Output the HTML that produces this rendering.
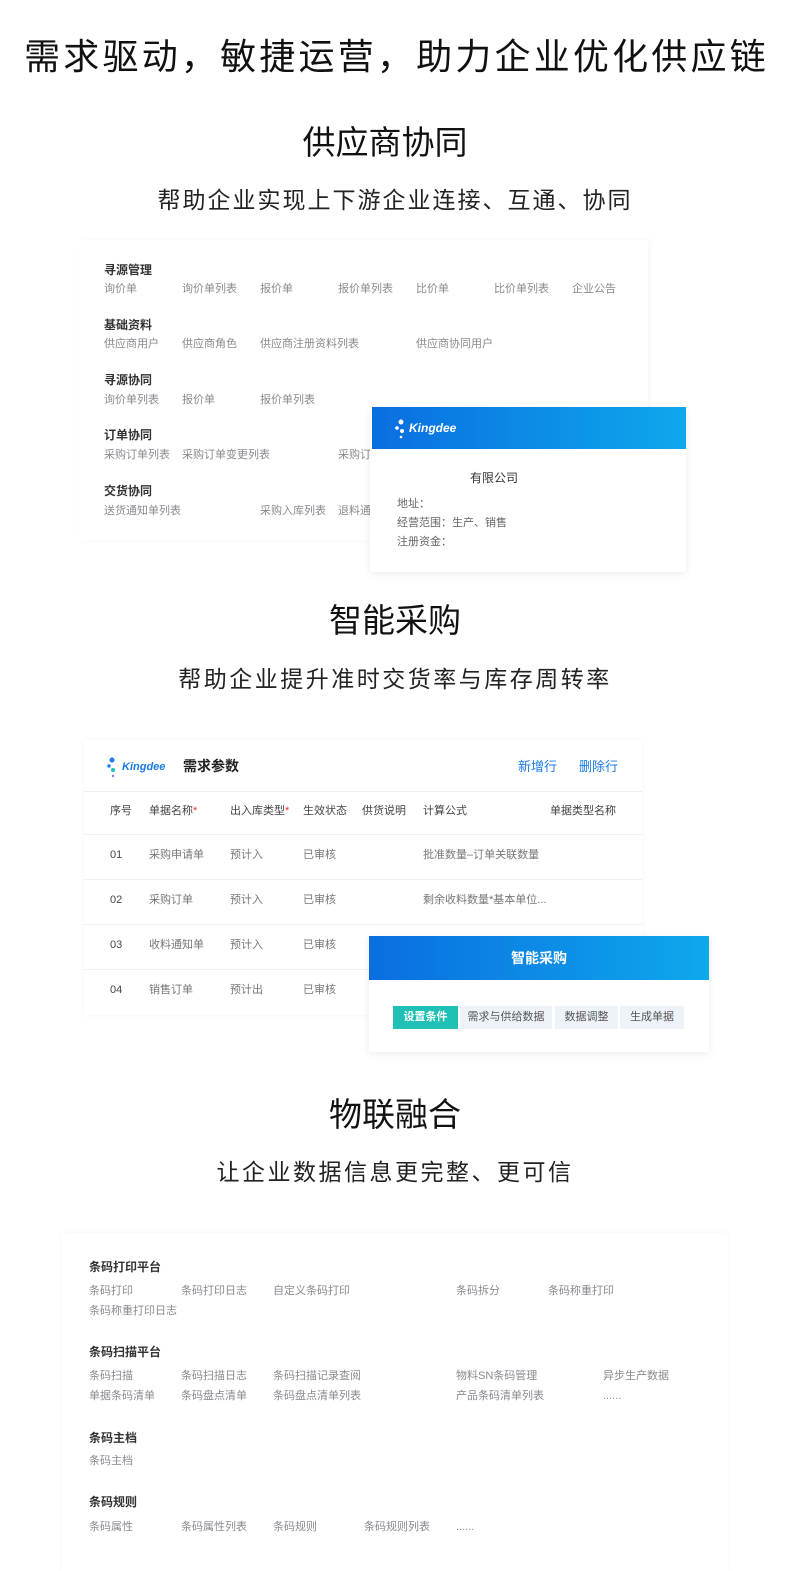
<!DOCTYPE html>
<html><head><meta charset="utf-8"><style>
*{margin:0;padding:0;box-sizing:border-box}
body{width:790px;height:1571px;background:#fff;position:relative;overflow:hidden;font-family:"Liberation Sans","Noto Sans CJK SC",sans-serif;}
.a{position:absolute;white-space:nowrap;line-height:1;}
.h1{font-size:36px;color:#111;left:0;width:790px;text-align:center;letter-spacing:3.2px;text-indent:3px}
.h2{font-size:33px;color:#111;left:0;width:790px;text-align:center}
.sub{font-size:23px;color:#222;left:0;width:790px;text-align:center;letter-spacing:2px}
.g{font-size:11px;color:#8a8a90}
.b{font-size:12px;color:#333;font-weight:bold}
.panel{position:absolute;background:#fff}
.blue{background:linear-gradient(90deg,#0a6ee0,#0ea8ec)}
.th{font-size:11px;color:#444}
.td{font-size:11px;color:#777}
.tab{position:absolute;top:1006px;height:23px;font-size:11px;color:#555;background:#eef2f9;text-align:center;line-height:23px}
</style></head><body>
<div class="a h1" style="top:39px">需求驱动，敏捷运营，助力企业优化供应链</div>

<div class="a h2" style="top:126px;left:-10px">供应商协同</div>
<div class="a sub" style="top:189px">帮助企业实现上下游企业连接、互通、协同</div>

<div class="panel" style="left:80px;top:240px;width:568px;height:300px;box-shadow:2px 0 6px rgba(0,0,0,0.04)"></div>
<div class="a b" style="left:104px;top:264px">寻源管理</div>
<div class="a g" style="left:104px;top:284px">询价单</div><div class="a g" style="left:182px;top:284px">询价单列表</div><div class="a g" style="left:260px;top:284px">报价单</div><div class="a g" style="left:338px;top:284px">报价单列表</div><div class="a g" style="left:416px;top:284px">比价单</div><div class="a g" style="left:494px;top:284px">比价单列表</div><div class="a g" style="left:572px;top:284px">企业公告</div>
<div class="a b" style="left:104px;top:319px">基础资料</div>
<div class="a g" style="left:104px;top:339px">供应商用户</div><div class="a g" style="left:182px;top:339px">供应商角色</div><div class="a g" style="left:260px;top:339px">供应商注册资料列表</div><div class="a g" style="left:416px;top:339px">供应商协同用户</div>
<div class="a b" style="left:104px;top:374px">寻源协同</div>
<div class="a g" style="left:104px;top:395px">询价单列表</div><div class="a g" style="left:182px;top:395px">报价单</div><div class="a g" style="left:260px;top:395px">报价单列表</div>
<div class="a b" style="left:104px;top:429px">订单协同</div>
<div class="a g" style="left:104px;top:450px">采购订单列表</div><div class="a g" style="left:182px;top:450px">采购订单变更列表</div><div class="a g" style="left:338px;top:450px">采购订</div>
<div class="a b" style="left:104px;top:485px">交货协同</div>
<div class="a g" style="left:104px;top:506px">送货通知单列表</div><div class="a g" style="left:260px;top:506px">采购入库列表</div><div class="a g" style="left:338px;top:506px">退料通</div>

<div class="panel" style="left:370px;top:407px;width:316px;height:165px;box-shadow:0 2px 8px rgba(0,0,0,0.08)"></div>
<div class="panel blue" style="left:372px;top:407px;width:314px;height:42px"></div>
<svg class="a" style="left:395px;top:419px" width="12" height="20"><circle cx="6" cy="3" r="2.5" fill="#fff"/><circle cx="2" cy="9" r="1.8" fill="#fff"/><circle cx="7" cy="12" r="2" fill="#fff"/><circle cx="6" cy="18" r="1.3" fill="#fff"/></svg>
<div class="a" style="left:409px;top:422px;font-size:12px;font-weight:bold;font-style:italic;color:#fff">Kingdee</div>
<div class="a" style="left:470px;top:472px;font-size:12px;color:#333">有限公司</div>
<div class="a g" style="left:397px;top:499px;color:#666">地址：</div>
<div class="a g" style="left:397px;top:518px;color:#666">经营范围：生产、销售</div>
<div class="a g" style="left:397px;top:537px;color:#666">注册资金：</div>

<div class="a h2" style="top:604px">智能采购</div>
<div class="a sub" style="top:668px;letter-spacing:2.5px">帮助企业提升准时交货率与库存周转率</div>

<div class="panel" style="left:84px;top:740px;width:558px;height:275px;box-shadow:0 0 6px rgba(0,0,0,0.04)"></div>
<svg class="a" style="left:107px;top:757px" width="14" height="22"><circle cx="5" cy="3" r="2.5" fill="#1a7be8"/><circle cx="2" cy="9" r="1.7" fill="#1a7be8"/><circle cx="6" cy="13" r="2" fill="#19c4b4"/><circle cx="6" cy="19" r="1.2" fill="#9b6de8"/></svg>
<div class="a" style="left:122px;top:762px;font-size:11px;font-weight:bold;font-style:italic;color:#1a7be8">Kingdee</div>
<div class="a" style="left:183px;top:759px;font-size:14px;font-weight:bold;color:#222">需求参数</div>
<div class="a" style="left:518px;top:760px;font-size:13px;color:#1a7be8">新增行</div>
<div class="a" style="left:579px;top:760px;font-size:13px;color:#1a7be8">删除行</div>
<div class="panel" style="left:84px;top:791px;width:558px;height:1px;background:#eee"></div>
<div class="a th" style="left:110px;top:806px">序号</div><div class="a th" style="left:149px;top:806px">单据名称<span style="color:#e33">*</span></div><div class="a th" style="left:230px;top:806px">出入库类型<span style="color:#e33">*</span></div><div class="a th" style="left:303px;top:806px">生效状态</div><div class="a th" style="left:362px;top:806px">供货说明</div><div class="a th" style="left:423px;top:806px">计算公式</div><div class="a th" style="left:550px;top:806px">单据类型名称</div>
<div class="panel" style="left:84px;top:834px;width:558px;height:1px;background:#f0f0f2"></div>
<div class="panel" style="left:84px;top:879px;width:558px;height:1px;background:#f0f0f2"></div>
<div class="panel" style="left:84px;top:924px;width:558px;height:1px;background:#f0f0f2"></div>
<div class="panel" style="left:84px;top:969px;width:558px;height:1px;background:#f0f0f2"></div>
<div class="a td" style="left:110px;top:850px;color:#444">01</div><div class="a td" style="left:149px;top:850px">采购申请单</div><div class="a td" style="left:230px;top:850px">预计入</div><div class="a td" style="left:303px;top:850px">已审核</div><div class="a td" style="left:423px;top:850px">批准数量–订单关联数量</div>
<div class="a td" style="left:110px;top:895px;color:#444">02</div><div class="a td" style="left:149px;top:895px">采购订单</div><div class="a td" style="left:230px;top:895px">预计入</div><div class="a td" style="left:303px;top:895px">已审核</div><div class="a td" style="left:423px;top:895px">剩余收料数量*基本单位...</div>
<div class="a td" style="left:110px;top:940px;color:#444">03</div><div class="a td" style="left:149px;top:940px">收料通知单</div><div class="a td" style="left:230px;top:940px">预计入</div><div class="a td" style="left:303px;top:940px">已审核</div>
<div class="a td" style="left:110px;top:985px;color:#444">04</div><div class="a td" style="left:149px;top:985px">销售订单</div><div class="a td" style="left:230px;top:985px">预计出</div><div class="a td" style="left:303px;top:985px">已审核</div>

<div class="panel" style="left:369px;top:936px;width:340px;height:116px;box-shadow:0 2px 8px rgba(0,0,0,0.08)"></div>
<div class="panel blue" style="left:369px;top:936px;width:340px;height:44px"></div>
<div class="a" style="left:369px;width:340px;text-align:center;top:951px;font-size:14px;font-weight:bold;color:#fff">智能采购</div>
<div class="tab" style="left:393px;width:65px;background:#1fc0b6;color:#fff;font-weight:bold">设置条件</div>
<div class="tab" style="left:460px;width:92px">需求与供给数据</div>
<div class="tab" style="left:555px;width:63px">数据调整</div>
<div class="tab" style="left:620px;width:64px">生成单据</div>

<div class="a h2" style="top:1098px">物联融合</div>
<div class="a sub" style="top:1161px;letter-spacing:2.5px">让企业数据信息更完整、更可信</div>

<div class="panel" style="left:62px;top:1233px;width:666px;height:338px;box-shadow:0 0 6px rgba(0,0,0,0.04)"></div>
<div class="a b" style="left:89px;top:1261px">条码打印平台</div>
<div class="a g" style="left:89px;top:1286px">条码打印</div><div class="a g" style="left:181px;top:1286px">条码打印日志</div><div class="a g" style="left:273px;top:1286px">自定义条码打印</div><div class="a g" style="left:456px;top:1286px">条码拆分</div><div class="a g" style="left:548px;top:1286px">条码称重打印</div>
<div class="a g" style="left:89px;top:1306px">条码称重打印日志</div>
<div class="a b" style="left:89px;top:1346px">条码扫描平台</div>
<div class="a g" style="left:89px;top:1371px">条码扫描</div><div class="a g" style="left:181px;top:1371px">条码扫描日志</div><div class="a g" style="left:273px;top:1371px">条码扫描记录查阅</div><div class="a g" style="left:456px;top:1371px">物料SN条码管理</div><div class="a g" style="left:603px;top:1371px">异步生产数据</div>
<div class="a g" style="left:89px;top:1391px">单据条码清单</div><div class="a g" style="left:181px;top:1391px">条码盘点清单</div><div class="a g" style="left:273px;top:1391px">条码盘点清单列表</div><div class="a g" style="left:456px;top:1391px">产品条码清单列表</div><div class="a g" style="left:603px;top:1391px">......</div>
<div class="a b" style="left:89px;top:1432px">条码主档</div>
<div class="a g" style="left:89px;top:1456px">条码主档</div>
<div class="a b" style="left:89px;top:1496px">条码规则</div>
<div class="a g" style="left:89px;top:1522px">条码属性</div><div class="a g" style="left:181px;top:1522px">条码属性列表</div><div class="a g" style="left:273px;top:1522px">条码规则</div><div class="a g" style="left:364px;top:1522px">条码规则列表</div><div class="a g" style="left:456px;top:1522px">......</div>
</body></html>
